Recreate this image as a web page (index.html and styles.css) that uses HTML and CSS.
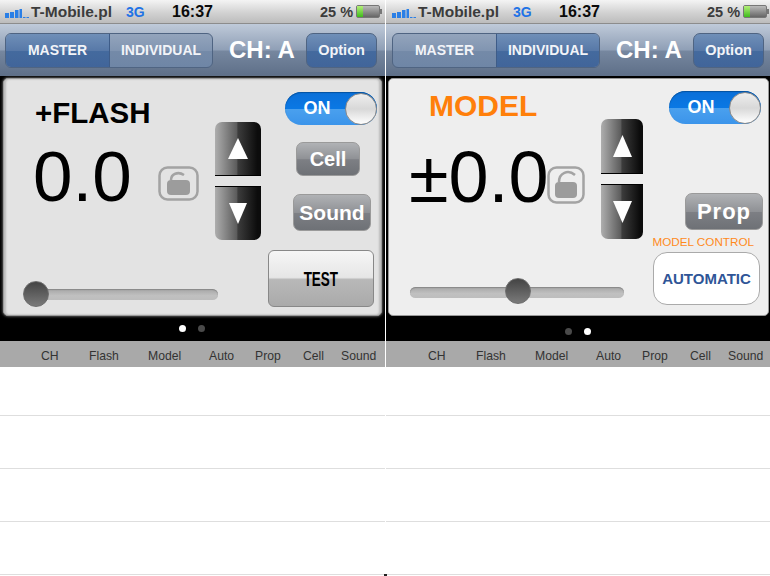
FILE: index.html
```html
<!DOCTYPE html>
<html lang="pl">
<head>
  <meta charset="UTF-8" />
  <meta name="viewport" content="width=device-width, initial-scale=1.0" />
  <title>Flash Control</title>
  <link rel="stylesheet" href="styles.css">
</head>
<body>

  <main class="page">

    <!-- ===== FLASH ===== -->
    <section class="screen screen-flash">
      <div class="status">
        <svg class="signal" width="24" height="9" viewBox="0 0 24 9"><path fill="#2a7fe6" d="M0 4h4v5H0zM5 3h4v6H5zM10 1h3.500v8H10zM14.500 0H17v9h-2.500z"/><path fill="#2a7fe6" d="M18 8h2.500v1H18zM21.500 8H24v1h-2.500z"/></svg>
        <span class="carrier">T-Mobile.pl</span>
        <span class="net">3G</span>
        <span class="clock">16:37</span>
        <span class="percent">25 %</span>
        <span class="battery"><span class="battery-fill"></span></span>
      </div>

      <div class="nav">
        <div class="segment">
          <span class="seg-item seg-on">MASTER</span>
          <span class="seg-item">INDIVIDUAL</span>
        </div>
        <span class="channel">CH: A</span>
        <span class="option">Option</span>
      </div>

      <div class="stage">
        <div class="panel">
          <div class="main-col">
            <h2 class="title">+FLASH</h2>
            <div class="value-row">
              <span class="value">0.0</span>
              <svg class="lock" width="41" height="35" viewBox="0 0 41 35"><rect x="1.500" y="1.500" width="38" height="32" rx="8" fill="none" stroke="#a3a3a3" stroke-width="2.500"/><path fill="none" stroke="#a3a3a3" stroke-width="2.500" d="M13 14C13 8 20 5 26 9"/><rect x="9" y="14" width="23" height="15" rx="4" fill="#9c9c9c"/></svg>
            </div>
            <div class="slider">
              <span class="thumb"></span>
            </div>
          </div>
          <div class="arrows">
            <span class="arrow arrow-up"><svg width="20" height="21" viewBox="0 0 20 21"><path fill="#fff" d="M10 0 20 21H0z"/></svg></span>
            <span class="arrow arrow-down"><svg width="18" height="21" viewBox="0 0 18 21"><path fill="#fff" d="M0 0h18L9 21z"/></svg></span>
          </div>
          <div class="side-col">
            <div class="switch"><span>ON</span><i></i></div>
            <span class="grey-btn btn-cell">Cell</span>
            <span class="grey-btn btn-sound">Sound</span>
            <span class="test-btn"><b>TEST</b></span>
          </div>
        </div>
        <div class="dots"><i class="dot dot-on"></i><i class="dot"></i></div>
      </div>

      <div class="heads">
        <span>CH</span><span>Flash</span><span>Model</span><span>Auto</span><span>Prop</span><span>Cell</span><span>Sound</span>
      </div>
      <div class="row"></div>
      <div class="row"></div>
      <div class="row"></div>
      <div class="row"></div>
    </section>

    <!-- ===== MODEL ===== -->
    <section class="screen screen-model">
      <div class="status">
        <svg class="signal" width="24" height="9" viewBox="0 0 24 9"><path fill="#2a7fe6" d="M0 4h4v5H0zM5 3h4v6H5zM10 1h3.500v8H10zM14.500 0H17v9h-2.500z"/><path fill="#2a7fe6" d="M18 8h2.500v1H18zM21.500 8H24v1h-2.500z"/></svg>
        <span class="carrier">T-Mobile.pl</span>
        <span class="net">3G</span>
        <span class="clock">16:37</span>
        <span class="percent">25 %</span>
        <span class="battery"><span class="battery-fill"></span></span>
      </div>

      <div class="nav">
        <div class="segment">
          <span class="seg-item">MASTER</span>
          <span class="seg-item seg-on">INDIVIDUAL</span>
        </div>
        <span class="channel">CH: A</span>
        <span class="option">Option</span>
      </div>

      <div class="stage">
        <div class="panel">
          <div class="main-col">
            <h2 class="title">MODEL</h2>
            <div class="value-row">
              <span class="value">±0.0</span>
              <svg class="lock" width="38" height="38" viewBox="0 0 38 38"><rect x="1.500" y="1.500" width="35" height="35" rx="8" fill="none" stroke="#a3a3a3" stroke-width="2.500"/><path fill="none" stroke="#a3a3a3" stroke-width="2.500" d="M12 16C12 7 21 3 28 9"/><rect x="8" y="16" width="22" height="16" rx="4" fill="#9c9c9c"/></svg>
            </div>
            <div class="slider">
              <span class="thumb"></span>
            </div>
          </div>
          <div class="arrows">
            <span class="arrow arrow-up"><svg width="19" height="22" viewBox="0 0 19 22"><path fill="#fff" d="M9.500 0 19 22H0z"/></svg></span>
            <span class="arrow arrow-down"><svg width="19" height="22" viewBox="0 0 19 22"><path fill="#fff" d="M0 0h19L9.500 22z"/></svg></span>
          </div>
          <div class="side-col">
            <div class="switch"><span>ON</span><i></i></div>
            <span class="grey-btn btn-prop">Prop</span>
            <span class="model-label">MODEL CONTROL</span>
            <span class="auto-btn">AUTOMATIC</span>
          </div>
        </div>
        <div class="dots"><i class="dot"></i><i class="dot dot-on"></i></div>
      </div>

      <div class="heads">
        <span>CH</span><span>Flash</span><span>Model</span><span>Auto</span><span>Prop</span><span>Cell</span><span>Sound</span>
      </div>
      <div class="row"></div>
      <div class="row"></div>
      <div class="row"></div>
      <div class="row"></div>
    </section>

    <i class="seam"></i>
  </main>

</body>
</html>
```

FILE: styles.css
```css
/* ===== PAGE ===== */
body{margin:0;background:#fff;font-family:"Liberation Sans",Arial,sans-serif;overflow:hidden;}
.page{display:flex;width:770px;height:576px;position:relative;overflow:hidden;}
.screen{flex:none;width:385px;}
.screen-model{width:384px;margin-left:1px;}
.screen-model .status,.screen-model .nav,.screen-model .heads{padding-left:1px;}
.seam{position:absolute;left:384px;top:574px;width:3px;height:2px;background:#222;}

/* status bar */
.status{display:flex;align-items:center;height:23px;
  background:linear-gradient(#f4f4f4,#d2d2d2 55%,#bcbcbc);border-bottom:1px solid #8c8c8c;
  color:#3c3c3c;font-weight:bold;}
.signal{flex:none;margin:4px 0 0 5px;}
.carrier{margin-left:2px;font-size:15.500px;width:95px;}
.net{color:#1f73e6;font-size:14px;width:46px;}
.clock{color:#0a0a0a;font-size:16px;width:148px;}
.percent{font-size:14.500px;width:36px;}
.battery{flex:none;position:relative;width:22px;height:11px;border:1px solid #777;border-radius:2px;
  background:linear-gradient(#bbb,#666);}
.battery::after{content:"";position:absolute;right:-3px;top:3px;width:2px;height:5px;background:#777;}
.battery-fill{display:block;width:6px;height:11px;background:linear-gradient(#b5f07a,#3fbb1c);}

/* nav bar */
.nav{display:flex;align-items:center;height:52px;
  background:linear-gradient(#bfcad9,#8f9fb6 50%,#76879f 52%,#5e6f88);}
.segment{flex:none;display:flex;width:206px;height:33px;margin-left:5px;border:1px solid #4f6482;border-radius:6px;overflow:hidden;
  background:linear-gradient(#93a4bc,#8195b1 50%,#748aa8 52%,#6f86a6);}
.seg-item{flex:1;display:flex;align-items:center;justify-content:center;color:#f2f4f8;font-size:14px;font-weight:bold;}
.seg-item:first-child{flex:0 0 103px;border-right:1px solid #3e5c88;}
.seg-on{background:linear-gradient(#6f8fb8,#5879a8 50%,#446a9e 52%,#41659a);}
.channel{flex:none;width:77px;margin-left:16px;color:#fff;font-size:24px;font-weight:bold;}
.option{flex:none;display:flex;align-items:center;justify-content:center;width:69px;height:33px;border:1px solid #4f6482;border-radius:7px;
  color:#f2f4f8;font-size:14.500px;font-weight:bold;
  background:linear-gradient(#6f8fb8,#5879a8 50%,#446a9e 52%,#41659a);}

/* black area with panel */
.stage{height:265px;background:#000;box-sizing:border-box;padding-top:2px;}
.panel{display:flex;height:238px;margin:0 3px;box-sizing:border-box;border-radius:5px;border:1px solid #9a9a9a;
  background:#e3e3e3;box-shadow:0 0 3px #999,inset 2px 0 2px #bbb,inset -2px 0 2px #bbb;}
.screen-model .panel{margin:0 1px 0 2px;background:#eee;box-shadow:none;}

.main-col{flex:none;width:211px;}
.title{margin:19px 0 0 31px;font-size:29.500px;line-height:30px;color:#000;}
.value-row{display:flex;align-items:flex-start;margin:13px 0 0 29px;}
.value{font-size:71px;line-height:72px;color:#000;}
.lock{flex:none;margin:25px 0 0 26px;}
.slider{position:relative;width:194px;height:11px;margin:76px 0 0 20px;border-radius:6px;
  background:linear-gradient(#a6a6a6,#c0c0c0 60%,#bdbdbd);border:0;box-shadow:inset 0 1px 1px #888;}
.thumb{position:absolute;left:-1px;top:-8px;width:26px;height:26px;box-sizing:border-box;border-radius:50%;
  border:1px solid #6c6c6c;background:linear-gradient(#444,#7a7a7a);}

/* arrows */
.arrows{flex:none;display:flex;flex-direction:column;gap:10px;width:46px;margin-top:43px;}
.arrow{display:flex;align-items:center;justify-content:center;height:54px;box-sizing:border-box;
  background:linear-gradient(90deg,#aeaeae,#5c5c5c 47%,#3c3c3c 50%,#0c0c0c 92%);border-bottom:1px solid #000;}
.arrow-up{border-radius:7px 7px 0 0;}
.arrow-down{border-radius:0 0 7px 7px;border-bottom:0;border-top:1px solid #000;}

/* right col */
.side-col{flex:1;display:flex;flex-direction:column;align-items:flex-end;}
.switch{display:flex;align-items:center;width:92px;height:33px;margin:13px 4px 0 0;box-sizing:border-box;border-radius:17px;
  background:linear-gradient(#0a6fd8,#0a78e4 50%,#4aa0ee 52%,#3b94ea);box-shadow:inset 0 1px 1px #04529f;}
.switch span{flex:1;text-align:center;padding-left:4px;color:#fff;font-size:18px;font-weight:bold;}
.switch i{flex:none;width:32px;height:32px;box-sizing:border-box;border-radius:50%;border:1px solid #888;background:linear-gradient(#eee,#d8d8d8 50%,#fff);}

.grey-btn{display:flex;align-items:center;justify-content:center;box-sizing:border-box;border-radius:7px;color:#fff;font-weight:bold;
  background:linear-gradient(#b0b2b5,#8f9195 50%,#7d7f84 52%,#6e7176);border:1px solid #9a9a9a;}
.btn-cell{width:64px;height:34px;margin:17px 21px 0 0;font-size:20px;}
.btn-sound{width:78px;height:37px;margin:18px 10px 0 0;font-size:21px;}
.btn-prop{width:78px;height:37px;margin:69px 5px 0 0;font-size:22px;letter-spacing:1px;}

.test-btn{display:flex;align-items:center;justify-content:center;width:106px;height:57px;margin:19px 7px 0 0;box-sizing:border-box;
  border:1px solid #888;border-radius:6px;color:#000;font-size:21px;
  background:linear-gradient(#f6f6f6,#e6e6e6 48%,#b8b8b8 52%,#aaa);}
.test-btn b{display:inline-block;transform:scaleX(.64);}

.model-label{margin:5px 14px 0 0;font-size:11.700px;line-height:14px;color:#ff8a1c;white-space:nowrap;}
.auto-btn{display:flex;align-items:center;justify-content:center;width:107px;height:53px;margin:3px 8px 0 0;box-sizing:border-box;
  border:1px solid #aaa;border-radius:14px;background:#fff;color:#2f5597;font-size:15px;font-weight:bold;}

/* model screen places */
.screen-model .title{margin:12px 0 0 40px;color:#ff7f0a;font-size:30px;}
.screen-model .value-row{margin:20px 0 0 20px;}
.screen-model .value{font-size:72px;}
.screen-model .lock{margin:25px 0 0 -2px;}
.screen-model .main-col{width:212px;}
.screen-model .slider{width:214px;margin:74px 0 0 21px;}
.screen-model .thumb{left:95px;top:-9px;}
.screen-model .arrows{width:42px;margin-top:40px;}
.screen-model .switch{margin:12px 7px 0 0;}
.screen-model .arrow{height:55px;}

/* dots */
.dots{display:flex;justify-content:center;gap:12px;margin-top:9px;padding-right:1px;}
.dot{width:7px;height:7px;border-radius:50%;background:#4a4a4a;}
.dot-on{background:#fff;}
.screen-model .dots{margin-top:12px;padding-right:0;}

/* table */
.heads{display:grid;grid-template-columns:41px 48px 59px 61px 46px 48px 38px 1fr;height:26px;align-items:center;box-sizing:border-box;padding-top:3px;
  background:#a9a9a9;color:#333;font-size:12.200px;}
.heads span:first-child{grid-column:2;}
.row{height:52px;border-bottom:1px solid #dedede;}
.heads + .row{height:48px;}
```
